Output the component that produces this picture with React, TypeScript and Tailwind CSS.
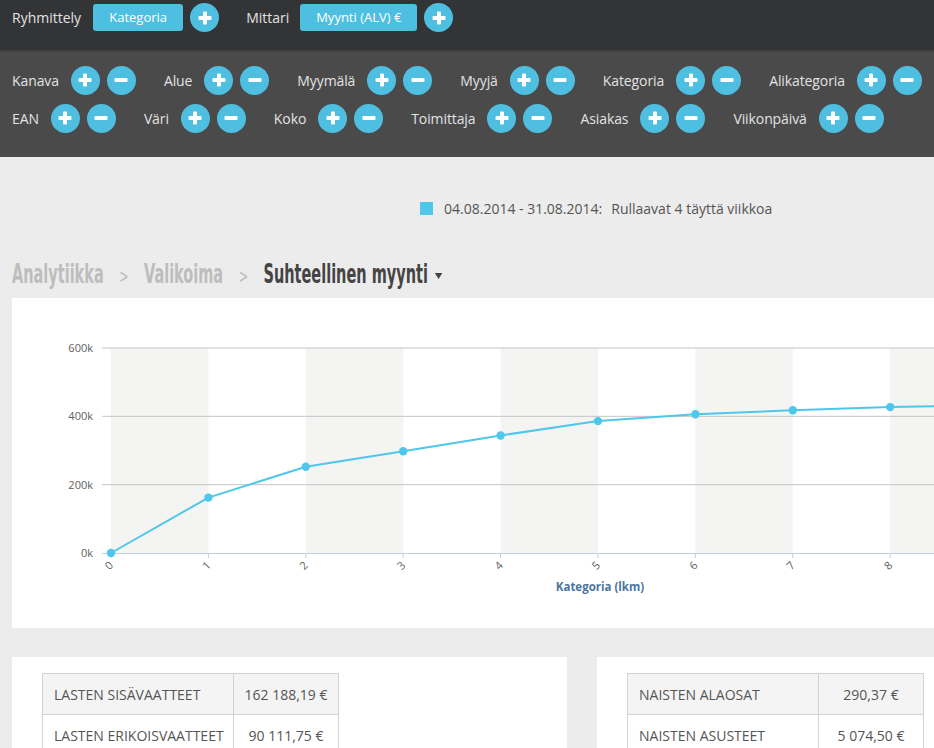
import React from "react";

function CircleBtn({ kind }: { kind: "plus" | "minus" }) {
  return (
    <span className="inline-flex h-[29px] w-[29px] shrink-0 items-center justify-center rounded-full bg-[#4ebfe0]">
      <svg width="14" height="14" viewBox="0 0 14 14">
        {kind === "plus" && <rect x="5" y="0.5" width="4" height="13" rx="1" fill="#fff" />}
        <rect x="0.5" y="5" width="13" height="4" rx="1" fill="#fff" />
      </svg>
    </span>
  );
}

function FilterItem({ label }: { label: string }) {
  return (
    <div className="mr-[28px] flex items-center">
      <span className="mr-3 text-[14px] tracking-[-0.1px] text-[#e2e2e2]">{label}</span>
      <div className="flex items-center gap-[7px]">
        <CircleBtn kind="plus" />
        <CircleBtn kind="minus" />
      </div>
    </div>
  );
}

const data = [0, 162.19, 252.3, 298, 344, 386, 406, 418, 427, 432, 436];

function Chart() {
  const x0 = 99;
  const step = 97.4;
  const yOf = (v: number) => 255 - (v / 600) * 205;
  const grid = [0, 200, 400, 600];
  const pts = data.map((v, i) => [x0 + i * step, yOf(v)] as const);
  return (
    <svg width="1140" height="330" viewBox="0 0 1140 330" className="block">
      {data.map((_, i) =>
        i % 2 === 0 && i < data.length - 1 ? (
          <rect key={"b" + i} x={x0 + i * step} y={50} width={step} height={205} fill="#f4f4f3" />
        ) : null
      )}
      {grid.map((g) => (
        <g key={g}>
          {g !== 0 && <line x1={90} x2={1090} y1={yOf(g)} y2={yOf(g)} stroke="#c4c4c4" strokeWidth={1} />}
          <text
            x={81}
            y={yOf(g) + 4}
            textAnchor="end"
            fontSize="11"
            fill="#606060"
            fontFamily="'Open Sans', sans-serif"
          >
            {g}k
          </text>
        </g>
      ))}
      <line x1={90} x2={1090} y1={255.5} y2={255.5} stroke="#c0d0e0" strokeWidth={1} />
      {pts.map(([x], i) =>
        i <= 8 ? (
          <g key={"t" + i}>
            <line x1={x} x2={x} y1={255} y2={260} stroke="#c0d0e0" strokeWidth={1} />
            <text
              x={x + 3}
              y={268}
              textAnchor="end"
              fontSize="11"
              fill="#606060"
              fontFamily="'Open Sans', sans-serif"
              transform={`rotate(-45 ${x + 3} 268)`}
            >
              {i}
            </text>
          </g>
        ) : (
          <line key={"t" + i} x1={x} x2={x} y1={255} y2={260} stroke="#c0d0e0" strokeWidth={1} />
        )
      )}
      <polyline
        points={pts.map(([x, y]) => `${x},${y}`).join(" ")}
        fill="none"
        stroke="#4fc7eb"
        strokeWidth={2}
      />
      {pts.map(([x, y], i) => (
        <circle key={"p" + i} cx={x} cy={y} r={4.2} fill="#4fc7eb" />
      ))}
      <text
        x={588}
        y={293}
        textAnchor="middle"
        fontSize="11.5"
        fontWeight="bold"
        fill="#4d759e"
        fontFamily="'Open Sans', sans-serif"
      >
        Kategoria (lkm)
      </text>
    </svg>
  );
}

function Table({ rows }: { rows: [string, string][] }) {
  return (
    <table className="w-[297px] border-collapse text-[14px] text-[#555]">
      <tbody>
        {rows.map(([a, b], i) => (
          <tr key={a} className={i % 2 === 0 ? "bg-[#f4f4f4]" : "bg-white"}>
            <td className="h-[41px] w-[191px] border border-[#d2d2d2] pl-[11px]">{a}</td>
            <td className="h-[41px] border border-[#d2d2d2] text-center">{b}</td>
          </tr>
        ))}
      </tbody>
    </table>
  );
}

export default function App() {
  return (
    <div className="h-[748px] w-full overflow-hidden bg-[#ececec] font-['Open_Sans',sans-serif]">
      {/* top bar */}
      <div className="flex h-[50px] items-start bg-[#333436] pl-3 pt-[3px]">
        <div className="flex h-[29px] items-center">
          <span className="text-[14px] text-[#e2e2e2]">Ryhmittely</span>
          <span className="ml-3 flex h-[27px] w-[90px] items-center justify-center rounded-[3px] bg-[#4ebfe0] text-[13px] text-white">
            Kategoria
          </span>
          <span className="ml-[7px]">
            <CircleBtn kind="plus" />
          </span>
          <span className="ml-[27px] text-[14px] text-[#e2e2e2]">Mittari</span>
          <span className="ml-[11px] flex h-[27px] w-[117px] items-center justify-center rounded-[3px] bg-[#4ebfe0] text-[13px] text-white">
            Myynti (ALV) €
          </span>
          <span className="ml-[7px]">
            <CircleBtn kind="plus" />
          </span>
        </div>
      </div>

      {/* filter bar */}
      <div className="h-[107px] border-t-2 border-[#3f3f3f] bg-[#4a4a4a] pl-3 pt-[13px]">
        <div className="flex h-[30px] items-center">
          {["Kanava", "Alue", "Myymälä", "Myyjä", "Kategoria", "Alikategoria"].map((l) => (
            <FilterItem key={l} label={l} />
          ))}
        </div>
        <div className="mt-[8px] flex h-[30px] items-center">
          {["EAN", "Väri", "Koko", "Toimittaja", "Asiakas", "Viikonpäivä"].map((l) => (
            <FilterItem key={l} label={l} />
          ))}
        </div>
      </div>

      <div className="ml-3 w-[1140px]">
        {/* legend */}
        <div className="ml-[408px] mt-[41px] flex h-[20px] items-center text-[14px] text-[#555]">
          <span className="mr-[11px] h-[13px] w-[13px] bg-[#4fc7eb]" />
          <span>04.08.2014 - 31.08.2014:</span>
          <span className="ml-[9px]">Rullaavat 4 täyttä viikkoa</span>
        </div>

        {/* breadcrumb */}
        <div className="mt-[41px] h-[30px] w-[800px] origin-left scale-x-[0.62] whitespace-nowrap font-['DejaVu_Sans_Condensed',sans-serif] text-[26px] font-bold leading-[30px]">
          <span className="text-[#bdbdbd]">Analytiikka</span>
          <span className="mx-[25px] text-[20px] font-normal text-[#bdbdbd]">&gt;</span>
          <span className="text-[#bdbdbd]">Valikoima</span>
          <span className="mx-[25px] text-[20px] font-normal text-[#bdbdbd]">&gt;</span>
          <span className="text-[#444]">Suhteellinen myynti</span>
          <span className="ml-[11px] inline-block h-0 w-0 border-x-[6px] border-t-[6px] border-x-transparent border-t-[#444] align-middle" />
        </div>

        {/* chart card */}
        <div className="mt-[9px] h-[330px] bg-white">
          <Chart />
        </div>

        {/* bottom cards */}
        <div className="mt-[29px] flex gap-[30px]">
          <div className="h-[200px] w-[555px] bg-white pl-[30px] pt-[16px]">
            <Table
              rows={[
                ["LASTEN SISÄVAATTEET", "162 188,19 €"],
                ["LASTEN ERIKOISVAATTEET", "90 111,75 €"],
              ]}
            />
          </div>
          <div className="h-[200px] w-[555px] bg-white pl-[30px] pt-[16px]">
            <Table
              rows={[
                ["NAISTEN ALAOSAT", "290,37 €"],
                ["NAISTEN ASUSTEET", "5 074,50 €"],
              ]}
            />
          </div>
        </div>
      </div>
    </div>
  );
}
